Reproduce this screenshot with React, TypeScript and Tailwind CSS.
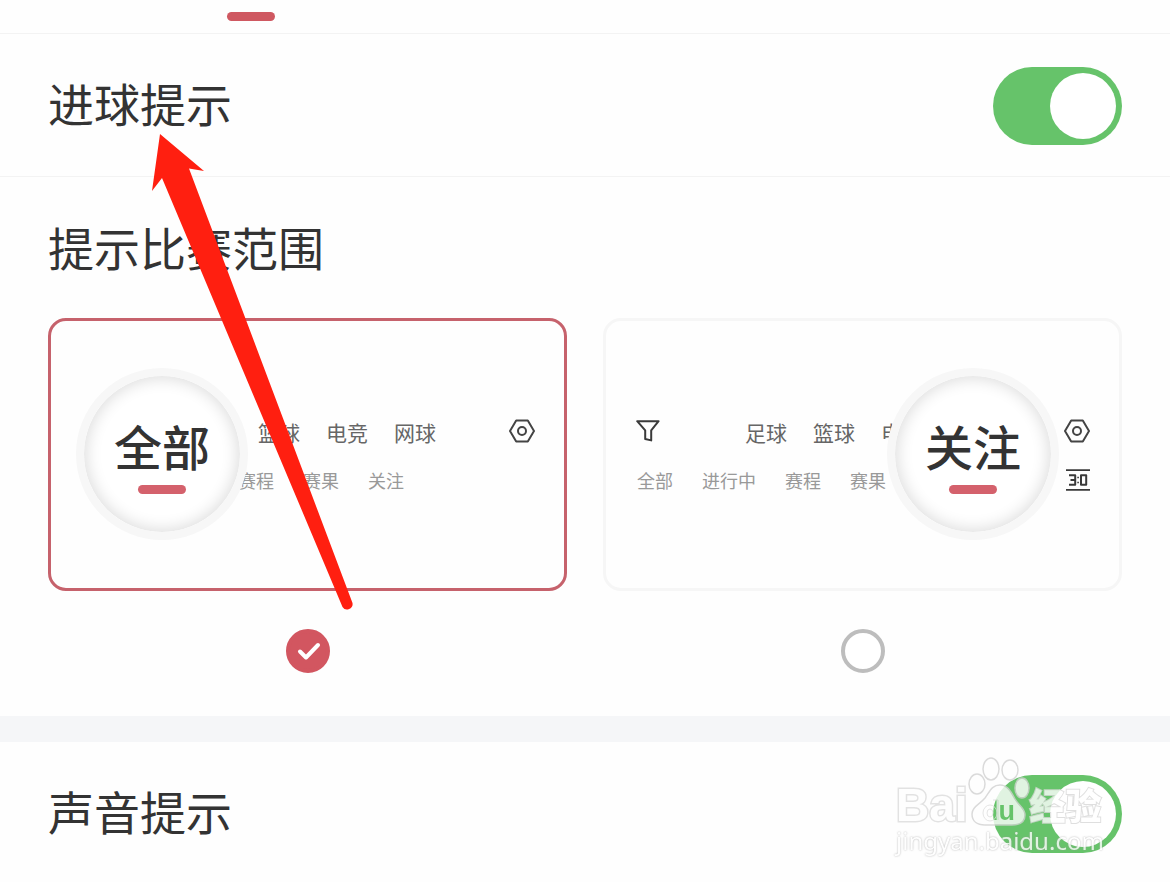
import type { ReactNode } from "react";

function Toggle({ id }: { id: string }) {
  return (
    <input
      id={id}
      type="checkbox"
      role="switch"
      defaultChecked
      className="relative h-[78px] w-[129px] shrink-0 cursor-pointer appearance-none rounded-full bg-gray-200 before:absolute before:top-[6px] before:left-[6px] before:size-[66px] before:rounded-full before:bg-white checked:bg-[#66c36a] checked:before:left-[57px]"
    />
  );
}

function SwitchRow({ id, label, className }: { id: string; label: string; className: string }) {
  return (
    <div className={`flex items-center justify-between px-12 pt-[33px] ${className}`}>
      <label htmlFor={id} className="pb-2 text-[46px] leading-[48px]">
        {label}
      </label>
      <Toggle id={id} />
    </div>
  );
}

function HexNutIcon() {
  return (
    <svg viewBox="0 0 26 24" className="h-6 w-[26px] shrink-0" fill="none" stroke="#444" strokeWidth="2" strokeLinejoin="round">
      <path d="M7.200 1.600h11.600L25 12l-6.200 10.400H7.200L1 12z" />
      <circle cx="13" cy="12" r="4" />
    </svg>
  );
}

function FunnelIcon() {
  return (
    <svg viewBox="0 0 24 22" className="h-[22px] w-6 shrink-0" fill="none" stroke="#3a3a3a" strokeWidth="2" strokeLinejoin="round">
      <path d="M1.200 1.200h21.400l-7.400 9.200v10l-6-1.400v-8.600z" />
    </svg>
  );
}

function ScoreIcon() {
  return (
    <svg viewBox="0 0 24 22" className="h-[22px] w-6 shrink-0" fill="none" stroke="#3a3a3a" strokeWidth="1.8">
      <path d="M0 1.200h24M0 20.800h24" />
      <path d="M3 6.200h6.200v9.600H3M4.500 11h4.700M15 6.200h5.200v9.600H15z" strokeWidth="2" strokeLinejoin="round" />
      <path d="M11.300 8.500h1.600M11.300 13.500h1.600" strokeWidth="1.500" />
    </svg>
  );
}

function Lens({ label, className }: { label: string; className: string }) {
  return (
    <div
      className={`absolute top-[47px] flex size-[172px] flex-col items-center rounded-full border-8 border-[#f7f7f7] bg-white pt-[45px] shadow-[inset_0_0_16px_2px_rgba(0,0,0,0.14)] ${className}`}
    >
      <span className="text-5xl leading-[48px] font-medium">{label}</span>
      <span className="mt-4 h-[9px] w-12 rounded-full bg-[#d4616c]" />
    </div>
  );
}

function Words({ items, className }: { items: string[]; className: string }) {
  return (
    <div className={`flex whitespace-nowrap leading-7 ${className}`}>
      {items.map((item) => (
        <span key={item}>{item}</span>
      ))}
    </div>
  );
}

function ScopeOption({
  id,
  frame,
  defaultChecked,
  children,
}: {
  id: string;
  frame: string;
  defaultChecked?: boolean;
  children: ReactNode;
}) {
  return (
    <div className="flex min-w-0 flex-col items-center gap-[38px]">
      <label
        htmlFor={id}
        className={`relative flex w-full cursor-pointer flex-col gap-5 overflow-hidden rounded-[18px] border-[3px] pt-[97px] pb-[94px] ${frame}`}
      >
        {children}
      </label>
      <div className="relative size-11">
        <input
          id={id}
          type="radio"
          name="scope"
          defaultChecked={defaultChecked}
          className="peer block size-11 cursor-pointer appearance-none rounded-full border-4 border-[#bdbdbd] bg-white checked:border-[#d25660] checked:bg-[#d25660]"
        />
        <svg
          viewBox="0 0 44 44"
          className="pointer-events-none absolute inset-0 hidden peer-checked:block"
          fill="none"
          stroke="#fff"
          strokeWidth="4"
          strokeLinecap="round"
          strokeLinejoin="round"
        >
          <path d="M14 22.500l6 6 12-12.500" />
        </svg>
      </div>
    </div>
  );
}

function Arrow() {
  return (
    <svg viewBox="0 0 206 480" className="pointer-events-none absolute top-[132px] left-[150px] h-[480px] w-[206px]" fill="#ff1f10">
      <path d="M10 2L54 39l-15-2.500L202.500 471a5.500 5.500 0 0 1-10 4L12 46 2 59z" />
    </svg>
  );
}

function Watermark() {
  return (
    <div className="pointer-events-none absolute right-[62px] bottom-7 w-[212px] text-white opacity-80">
      <div className="flex h-[72px] items-end">
        <span className="pb-0.5 font-['Liberation_Sans'] text-[46px] leading-[42px] font-bold [paint-order:stroke] [-webkit-text-stroke:3px_#dcdcdc]">
          Bai
        </span>
        <svg viewBox="0 0 62 72" className="h-[72px] w-[62px] shrink-0" fill="#fff" stroke="#d2d2d2" strokeWidth="1.500">
          <defs>
            <mask id="paw-letters" maskUnits="userSpaceOnUse" x="0" y="0" width="62" height="72">
              <rect width="62" height="72" fill="#fff" stroke="none" />
              <text x="14" y="64" fontFamily="Liberation Sans" fontWeight="700" fontSize="27" fill="#000" stroke="none">
                du
              </text>
            </mask>
          </defs>
          <ellipse cx="9" cy="28" rx="8" ry="10" />
          <ellipse cx="23" cy="13" rx="8" ry="11" />
          <ellipse cx="42" cy="14" rx="8" ry="10" />
          <ellipse cx="54" cy="32" rx="7" ry="10" />
          <path
            mask="url(#paw-letters)"
            d="M32 29c8 0 11 7 15 14s10 9 10 16c0 8-6 10-13 10H17C9 69 4 65 4 58c0-7 7-9 13-16 5-7 7-13 15-13z"
          />
          <g fill="none" stroke="#dedede" strokeWidth="1">
            <ellipse cx="22" cy="57" rx="7" ry="8" />
            <ellipse cx="22" cy="57" rx="3" ry="4" />
            <path d="M25 44h5v20" />
          </g>
        </svg>
        <span className="pb-1 text-[36px] leading-[40px] font-black [paint-order:stroke] [-webkit-text-stroke:2px_#d8d8d8]">经验</span>
      </div>
      <div className="font-['Noto_Sans'] text-2xl leading-[26px] [text-shadow:0_0_2px_#999]">jingyan.baidu.com</div>
    </div>
  );
}

export default function App() {
  return (
    <main className="relative min-h-screen overflow-hidden bg-[#fefefe] font-['Noto_Sans_CJK_SC',sans-serif] text-[#333]">
      <header className="border-b border-[#f3f3f3] pt-3 pb-3 pl-[227px]">
        <div className="h-[9px] w-12 rounded-full bg-[#cf5861]" />
      </header>

      <SwitchRow id="goal" label="进球提示" className="border-b border-[#f3f3f3] pb-[31px]" />

      <section className="px-12 pt-[45px] pb-[43px]">
        <h2 className="text-[46px] leading-[48px]">提示比赛范围</h2>
        <div className="mt-12 grid grid-cols-2 gap-9">
          <ScopeOption id="scope-all" frame="border-[#c6626c]" defaultChecked>
            <div className="flex items-center pr-[29px] pl-[207px]">
              <Words items={["篮球", "电竞", "网球"]} className="gap-[26px] text-[21px] text-[#666]" />
              <span className="-mt-0.5 ml-auto">
                <HexNutIcon />
              </span>
            </div>
            <Words items={["赛程", "赛果", "关注"]} className="gap-[29px] pl-[187px] text-lg leading-7 text-[#999]" />
            <Lens label="全部" className="left-[25px]" />
          </ScopeOption>

          <ScopeOption id="scope-followed" frame="border-[#f6f6f6]">
            <div className="flex items-center pr-[29px] pl-[30px]">
              <span className="-mt-0.5">
                <FunnelIcon />
              </span>
              <Words items={["足球", "篮球", "电竞"]} className="ml-[85px] gap-[26px] text-[21px] text-[#666]" />
              <span className="-mt-0.5 ml-auto">
                <HexNutIcon />
              </span>
            </div>
            <div className="flex items-center justify-between pr-[29px] pl-[31px]">
              <Words items={["全部", "进行中", "赛程", "赛果"]} className="gap-[29px] text-lg leading-7 text-[#999]" />
              <ScoreIcon />
            </div>
            <Lens label="关注" className="right-[60px]" />
          </ScopeOption>
        </div>
      </section>

      <div className="h-[26px] bg-[#f5f6f8]" />

      <SwitchRow id="sound" label="声音提示" className="pb-[29px]" />

      <Arrow />
      <Watermark />
    </main>
  );
}
